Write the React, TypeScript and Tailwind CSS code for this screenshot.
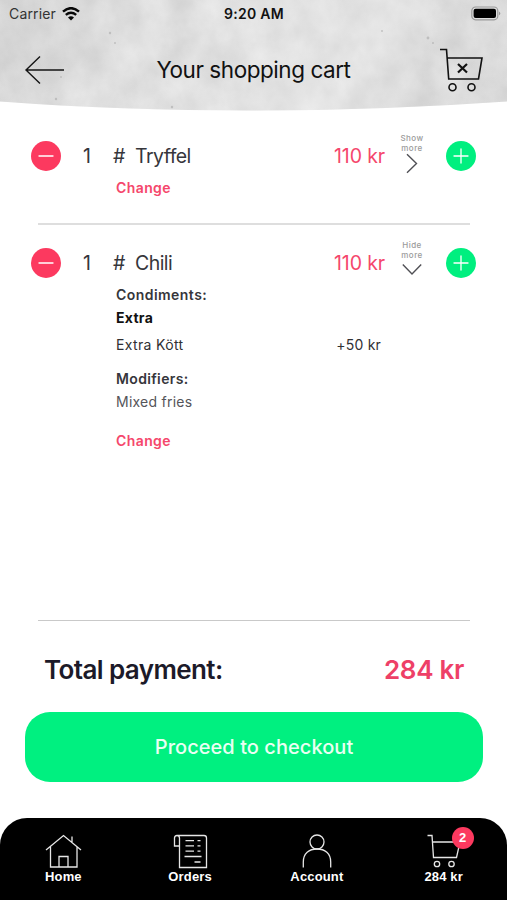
import type { ReactNode } from "react";

function ConcreteBackdrop() {
  return (
    <svg className="absolute inset-0" width="507" height="112" viewBox="0 0 507 112" aria-hidden="true">
      <defs>
        <filter id="mottle" x="0" y="0" width="100%" height="100%" colorInterpolationFilters="sRGB">
          <feTurbulence type="fractalNoise" baseFrequency="0.03 0.026" numOctaves="6" seed="21" />
          <feColorMatrix values="0.13 0.07 0 0 0.775  0.13 0.07 0 0 0.775  0.13 0.07 0 0 0.775  0 0 0 0 1" />
        </filter>
        <linearGradient id="shade" x1="0" y1="0" x2="1" y2="0.1">
          <stop offset="0" stopColor="#b0b0b0" stopOpacity="0.22" />
          <stop offset="0.35" stopColor="#e2e2e2" stopOpacity="0.2" />
          <stop offset="0.75" stopColor="#ececec" stopOpacity="0.35" />
          <stop offset="1" stopColor="#c0c0c0" stopOpacity="0.15" />
        </linearGradient>
        <clipPath id="arc">
          <path d="M0 0H507V101.5Q380 110.5 254 110.5Q120 110.5 0 101.5Z" />
        </clipPath>
      </defs>
      <g clipPath="url(#arc)">
        <rect width="507" height="112" filter="url(#mottle)" />
        <rect width="507" height="112" fill="url(#shade)" />
        <g fill="#999" fillOpacity="0.45">
          <circle cx="110" cy="33" r="1.2" />
          <circle cx="115" cy="43" r="1" />
          <circle cx="61" cy="77" r="0.9" />
          <circle cx="56" cy="99" r="1.2" />
          <circle cx="382" cy="31" r="1" />
          <circle cx="428" cy="38" r="1.4" />
          <circle cx="433" cy="43" r="1" />
          <circle cx="172" cy="107" r="1.2" />
        </g>
      </g>
    </svg>
  );
}

function WifiIcon() {
  return (
    <svg width="18" height="14" viewBox="0 0 18 14" fill="none" stroke="#080808">
      <path d="M1 4.6Q9 -2.2 17 4.6" strokeWidth="2.5" />
      <path d="M3.8 7.8Q9 3.5 14.2 7.8" strokeWidth="2.4" />
      <path d="M9 13.6L6 10.5Q9 8 12 10.5Z" fill="#080808" stroke="none" />
    </svg>
  );
}

function BatteryIcon() {
  return (
    <svg width="30" height="15" viewBox="0 0 30 15">
      <rect x="0.8" y="1" width="26" height="12.8" rx="3.8" fill="#dedede" stroke="#999" strokeWidth="1.2" />
      <rect x="2.6" y="2.8" width="22.4" height="9.2" rx="2" fill="#000" />
      <path d="M28 5.5Q30.6 7.4 28 9.3Z" fill="#999" />
    </svg>
  );
}

function RemoveButton() {
  return (
    <button aria-label="Remove one" className="grid size-[30px] place-items-center rounded-full bg-[#fc395f]">
      <svg width="16" height="4" viewBox="0 0 16 4"><path d="M1 2H15" stroke="#fff" strokeWidth="1.3" strokeLinecap="round" /></svg>
    </button>
  );
}

function AddButton() {
  return (
    <button aria-label="Add one" className="grid size-[30px] place-items-center rounded-full bg-[#00ef7f]">
      <svg width="16" height="16" viewBox="0 0 16 16"><path d="M1 8H15M8 1V15" stroke="#fff" strokeWidth="1.3" strokeLinecap="round" /></svg>
    </button>
  );
}

function ItemRow({ name, toggle, open }: { name: string; toggle: string; open: boolean }) {
  return (
    <div className="grid h-[48px] grid-cols-[52px_30px_22px_199px_66px_46px_30px] items-center pl-[31px] text-[19.5px] leading-6 text-[#36363b]">
      <RemoveButton />
      <span>1</span>
      <span>#</span>
      <span className="tracking-[-0.55px]">{name}</span>
      <span className="tracking-[-0.1px] whitespace-nowrap text-[#f5476c]">110 kr</span>
      <button className="flex w-[24px] flex-col items-center self-start pt-[1px] text-[#9b9b9b]">
        <span className="h-[9.5px] text-[8px] leading-[10px] font-medium tracking-[0.45px]">{toggle}</span>
        <span className="h-[10px] text-[8px] leading-[10px] font-medium tracking-[0.45px]">more</span>
        {open ? (
          <svg className="mt-[3px]" width="22" height="13" viewBox="0 0 22 13" fill="none" stroke="#505055" strokeWidth="1.4"><path d="M1.8 1.5L11 11L20.2 1.5" /></svg>
        ) : (
          <svg width="12" height="21" viewBox="0 0 12 21" fill="none" stroke="#505055" strokeWidth="1.4"><path d="M1 1.3L10.5 10.5L1 19.7" /></svg>
        )}
      </button>
      <AddButton />
    </div>
  );
}

function NavItem({ label, children }: { label: string; children: ReactNode }) {
  return (
    <a className="flex flex-col items-center pt-[15px] text-white">
      {children}
      <span className="mt-px font-['Liberation_Sans',sans-serif] text-[13px] leading-[14px] font-bold tracking-[0.15px]">{label}</span>
    </a>
  );
}

function TrolleyIcon() {
  return (
    <svg width="36" height="35" viewBox="0 0 36 35" fill="none" stroke="#e6e6e6" strokeWidth="1.3">
      <path d="M1.5 2.5H6L7.5 24.5H30.5L34 9H6.6" />
      <circle cx="11" cy="31" r="2.7" />
      <circle cx="25.5" cy="31" r="2.7" />
    </svg>
  );
}

export default function App() {
  return (
    <div className="flex h-[900px] w-[507px] flex-col overflow-hidden bg-white font-['Inter',sans-serif]">
      <header className="relative h-[132px] shrink-0">
        <ConcreteBackdrop />
        <div className="relative grid h-[27px] grid-cols-[1fr_auto_1fr] items-center pr-[6px] pl-[9px] text-[14px] text-[#111]">
          <div className="flex items-center gap-[6px]">
            <span className="tracking-[0.15px] text-[#333]">Carrier</span>
            <WifiIcon />
          </div>
          <span className="pr-[2px] font-semibold tracking-[0.3px]">9:20 AM</span>
          <div className="flex justify-end"><BatteryIcon /></div>
        </div>
        <div className="relative flex h-[86px] items-center justify-between pr-[23px] pl-[24px]">
          <svg width="41" height="30" viewBox="0 0 41 30" fill="none" stroke="#151515" strokeWidth="1.4"><path d="M16 1.5L2 15L16 28.5M2 15H40" /></svg>
          <h1 className="pl-[3px] text-[22.5px] tracking-[-0.45px] text-[#111]">Your shopping cart</h1>
          <svg width="45" height="46" viewBox="0 0 45 46" fill="none" stroke="#111" strokeWidth="1.6">
            <path d="M1 2.5H7.5L9.7 32H39.5L43 11H8.1" />
            <circle cx="13.5" cy="40.3" r="3.5" />
            <circle cx="32.5" cy="40.3" r="3.5" />
            <path d="M19 17L28 25.5M28 17L19 25.5" strokeWidth="2.2" />
          </svg>
        </div>
      </header>

      <main className="flex h-[488px] shrink-0 flex-col text-[14px] text-[#36363b]">
        <ItemRow name="Tryffel" toggle="Show" open={false} />
        <button className="-mt-[2px] ml-[116px] self-start leading-5 font-semibold tracking-[0.4px] text-[#f5476c]">Change</button>
        <div className="mt-[25px] mr-[37px] ml-[38px] h-[2px] shrink-0 bg-[#dedede]" />
        <div className="mt-[14px]">
          <ItemRow name="Chili" toggle="Hide" open />
        </div>
        <div className="-mt-[2px] flex flex-col pr-[126px] pl-[116px] leading-5">
          <h2 className="font-semibold tracking-[0.45px]">Condiments:</h2>
          <h3 className="mt-[3px] font-bold tracking-[0.3px] text-[#111]">Extra</h3>
          <div className="mt-[7px] flex justify-between text-[#303034]">
            <span className="tracking-[0.35px]">Extra Kött</span>
            <span className="tracking-[0.2px]">+50 kr</span>
          </div>
          <h2 className="mt-[14px] font-semibold tracking-[0.35px]">Modifiers:</h2>
          <span className="mt-[3px] tracking-[0.25px] text-[#55555a]">Mixed fries</span>
          <button className="mt-[19px] self-start font-semibold tracking-[0.4px] text-[#f5476c]">Change</button>
        </div>
      </main>

      <section className="flex h-[198px] shrink-0 flex-col">
        <div className="mr-[37px] ml-[38px] h-px shrink-0 bg-[#c9c9c9]" />
        <div className="flex h-[91px] shrink-0 items-center justify-between pt-[6px] pr-[43px] pl-[44px] text-[26px] font-semibold">
          <span className="tracking-[-0.6px] text-[#1c1a29]">Total payment:</span>
          <span className="tracking-[-0.3px] text-[#ee4067]">284 kr</span>
        </div>
        <button className="mr-[24px] ml-[25px] h-[70px] shrink-0 rounded-[25px] bg-[#00f080] text-[20px] font-medium tracking-[0.05px] text-[#e9fff3]">
          Proceed to checkout
        </button>
      </section>

      <nav className="grid h-[82px] shrink-0 grid-cols-4 rounded-t-[27px] bg-black">
        <NavItem label="Home">
          <svg width="38" height="36" viewBox="-0.5 0 38 36" fill="none" stroke="#e6e6e6" strokeWidth="1.3">
            <path d="M1.5 17L19 2.5L36.5 17M6 13.5V34H32.5V13.5M27.5 9V3.5M14.5 34V23.5H23.5V34" />
          </svg>
        </NavItem>
        <NavItem label="Orders">
          <svg width="36" height="36" viewBox="0 0 36 36" fill="none" stroke="#e6e6e6" strokeWidth="1.3">
            <path d="M5 2.5H32Q34.5 2.5 34.5 5V34.5H7.5V5Q7.5 2.5 5 2.5Q2.5 2.5 2.5 5V13H7.5" />
            <path d="M13.5 7.7H22M25.5 7.7H28.5M13.5 12.8H22M25.5 12.8H28.5M13.5 18.2H22M25.5 18.2H28.5M12.5 23.5H29.5M22.5 29H28.5" />
          </svg>
        </NavItem>
        <NavItem label="Account">
          <svg width="30" height="36" viewBox="0 0 30 36" fill="none" stroke="#e6e6e6" strokeWidth="1.3">
            <circle cx="15" cy="9" r="7" />
            <path d="M1.3 34.5V29C1.3 20.5 7 16 15 16S28.7 20.5 28.7 29V34.5" />
          </svg>
        </NavItem>
        <NavItem label="284 kr">
          <span className="relative h-[36px]">
            <TrolleyIcon />
            <span className="absolute -top-[6px] left-[26px] grid size-[22px] place-items-center rounded-full bg-[#fc395f] font-['Liberation_Sans',sans-serif] text-[13px] font-bold">2</span>
          </span>
        </NavItem>
      </nav>
    </div>
  );
}
